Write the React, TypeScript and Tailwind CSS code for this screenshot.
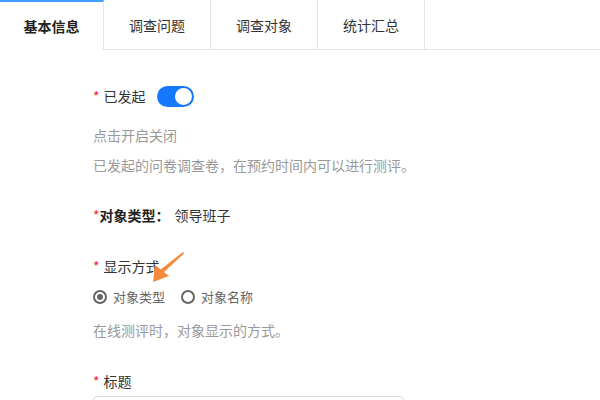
import { useState } from 'react';

const tabs = ['基本信息', '调查问题', '调查对象', '统计汇总'];

function Required() {
  return <span className="mr-1 text-[#f5222d]">*</span>;
}

function Radio({ checked, label }: { checked: boolean; label: string }) {
  return (
    <label className="flex items-center">
      <span className="flex h-[14px] w-[14px] items-center justify-center rounded-full border-2 border-[#666]">
        {checked ? <span className="h-[6px] w-[6px] rounded-full bg-[#666]" /> : null}
      </span>
      <span className="ml-[6px] text-[13px] text-[#666]">{label}</span>
    </label>
  );
}

export default function App() {
  const [active] = useState(0);
  const [on, setOn] = useState(true);
  const [mode] = useState(0);

  return (
    <div className="relative h-[400px] w-[600px] overflow-hidden bg-white text-[14px] leading-[20px] text-[#333]" style={{ fontFamily: '"Noto Sans CJK SC", "Noto Sans", sans-serif' }}>
      <div className="flex h-[50px]">
        {tabs.map((tab, i) => (
          <div
            key={tab}
            className={
              i === active
                ? 'flex w-[104px] items-center justify-center border-t-2 border-r border-[#e4e4e4] border-t-[#409eff] font-bold text-[#222]'
                : 'flex w-[107px] items-center justify-center border-r border-b border-[#e4e4e4] text-[#333]'
            }
          >
            {tab}
          </div>
        ))}
        <div className="flex-1 border-b border-[#e4e4e4]" />
      </div>

      <div className="flex flex-col pl-[93px]">
        <div className="mt-[36px] flex h-[20px] items-center">
          <Required />
          <span>已发起</span>
          <button
            type="button"
            onClick={() => setOn(!on)}
            className={on ? 'ml-[11px] flex h-[21px] w-[37px] items-center justify-end rounded-full bg-[#1677ff] px-[2px]' : 'ml-[11px] flex h-[21px] w-[37px] items-center justify-start rounded-full bg-[#bfbfbf] px-[2px]'}
          >
            <span className="h-[17px] w-[17px] rounded-full bg-white" />
          </button>
        </div>
        <p className="mt-[19px] text-[#999]">点击开启关闭</p>
        <p className="mt-[10px] text-[#999]">已发起的问卷调查卷，在预约时间内可以进行测评。</p>

        <div className="mt-[30px] flex">
          <span className="text-[#f5222d]">*</span>
          <span className="font-bold text-[#222]">对象类型：</span>
          <span className="ml-[5px]">领导班子</span>
        </div>

        <div className="mt-[31px] flex">
          <Required />
          <span>显示方式</span>
        </div>
        <div className="mt-[11px] flex items-center gap-[16px]">
          <Radio checked={mode === 0} label="对象类型" />
          <Radio checked={mode === 1} label="对象名称" />
        </div>
        <p className="mt-[13px] text-[#999]">在线测评时，对象显示的方式。</p>

        <div className="mt-[31px] flex">
          <Required />
          <span>标题</span>
        </div>
        <input className="mt-[5px] h-[32px] w-[311px] rounded border border-[#d9d9d9] px-2 outline-none" />
      </div>

      <svg className="pointer-events-none absolute left-0 top-0" width="600" height="400" viewBox="0 0 600 400">
        <polygon points="183,252 184,253.5 163,273 160,270" fill="#f58a3c" />
        <polygon points="153,282 155,265 169,276" fill="#f58a3c" />
      </svg>
    </div>
  );
}
